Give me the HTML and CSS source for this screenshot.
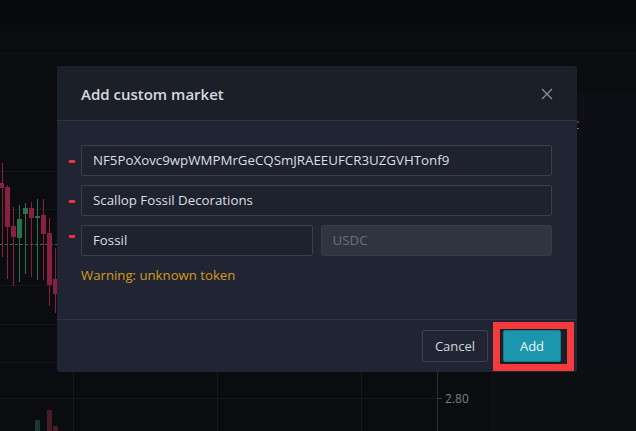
FILE: index.html
```html
<!DOCTYPE html>
<html>
<head>
<meta charset="utf-8">
<link rel="stylesheet" href="styles.css">
</head>
<body>
<div class="backdrop">
  <svg class="chart" width="636" height="431" viewBox="0 0 636 431" xmlns="http://www.w3.org/2000/svg">
    <rect x="0" y="0" width="636" height="431" fill="#0a0c10"/>
    <rect x="0" y="0" width="636" height="31" fill="#090a0d"/>
    <rect x="577" y="93" width="59" height="338" fill="#0d0f14"/>
    <rect x="491" y="372" width="145" height="59" fill="#0d0f13"/>
    <g stroke="#14171d" stroke-width="1">
      <line x1="0" y1="171.5" x2="57" y2="171.5"/>
      <line x1="0" y1="209.5" x2="57" y2="209.5"/>
      <line x1="0" y1="285.5" x2="57" y2="285.5"/>
      <line x1="0" y1="324.5" x2="57" y2="324.5"/>
      <line x1="0" y1="362.5" x2="57" y2="362.5"/>
      <line x1="0" y1="398.5" x2="436" y2="398.5"/>
      <line x1="73.5" y1="372" x2="73.5" y2="431"/>
      <line x1="217.5" y1="372" x2="217.5" y2="431"/>
      <line x1="361.5" y1="372" x2="361.5" y2="431"/>
    </g>
    <line x1="0" y1="53.5" x2="636" y2="53.5" stroke="#0e1015"/>
    <line x1="437.5" y1="372" x2="437.5" y2="431" stroke="#2a2e36"/>
    <line x1="437" y1="398.5" x2="442" y2="398.5" stroke="#3a3e46"/>
    <text x="445" y="403" class="axis">2.80</text>
    <line x1="0" y1="244.5" x2="57" y2="244.5" stroke="#2a7a48" stroke-dasharray="3,2"/>
    <g stroke-width="1">
      <line x1="2.5" y1="163" x2="2.5" y2="257" stroke="#8a2040"/>
      <rect x="0" y="183" width="4" height="5" fill="#8a2040"/>
      <line x1="7.5" y1="185" x2="7.5" y2="279" stroke="#8a2040"/>
      <rect x="5" y="187" width="5" height="40" fill="#8a2040"/>
      <line x1="13.5" y1="207" x2="13.5" y2="286" stroke="#8a2040"/>
      <rect x="11" y="226" width="5" height="11" fill="#8a2040"/>
      <line x1="19.5" y1="205" x2="19.5" y2="282" stroke="#2a7048"/>
      <rect x="17" y="219" width="5" height="19" fill="#2a7048"/>
      <line x1="25.5" y1="203" x2="25.5" y2="274" stroke="#2a7048"/>
      <rect x="23" y="208" width="5" height="6" fill="#2a7048"/>
      <line x1="31.5" y1="202" x2="31.5" y2="277" stroke="#8a2040"/>
      <rect x="29" y="208" width="5" height="10" fill="#8a2040"/>
      <line x1="37.5" y1="199" x2="37.5" y2="280" stroke="#2a7048"/>
      <rect x="35" y="216" width="5" height="2" fill="#2a7048"/>
      <line x1="43.5" y1="199" x2="43.5" y2="280" stroke="#8a2040"/>
      <rect x="41" y="215" width="5" height="19" fill="#8a2040"/>
      <line x1="49.5" y1="218" x2="49.5" y2="306" stroke="#8a2040"/>
      <rect x="47" y="233" width="5" height="52" fill="#8a2040"/>
      <line x1="55.5" y1="248" x2="55.5" y2="313" stroke="#8a2040"/>
      <rect x="53" y="279" width="4" height="15" fill="#8a2040"/>
    </g>
    <rect x="35" y="420" width="5" height="11" fill="#173a2c"/>
    <rect x="47" y="410" width="5" height="21" fill="#4a1a28"/>
    <rect x="53" y="426" width="5" height="5" fill="#4a1a28"/>
    <rect x="577" y="121" width="2" height="2" fill="#7a2a2a"/>
    <rect x="577" y="128" width="2" height="1" fill="#9a6a20"/>
  </svg>

  <div class="modal">
    <div class="modal-header">
      <h2 class="modal-title">Add custom market</h2>
      <svg class="close" width="12" height="12" viewBox="0 0 12 12" xmlns="http://www.w3.org/2000/svg">
        <path d="M1 1 L11 11 M11 1 L1 11" stroke="#8b9099" stroke-width="1.3" fill="none"/>
      </svg>
    </div>
    <div class="modal-body">
      <div class="row">
        <span class="req"></span>
        <div class="input">NF5PoXovc9wpWMPMrGeCQSmJRAEEUFCR3UZGVHTonf9</div>
      </div>
      <div class="row">
        <span class="req"></span>
        <div class="input">Scallop Fossil Decorations</div>
      </div>
      <div class="row">
        <span class="req req-high"></span>
        <div class="pair">
          <div class="input">Fossil</div>
          <div class="input disabled">USDC</div>
        </div>
      </div>
      <div class="warning">Warning: unknown token</div>
    </div>
    <div class="modal-footer">
      <button class="btn btn-cancel">Cancel</button>
      <div class="highlight">
        <button class="btn btn-add">Add</button>
      </div>
    </div>
  </div>
</div>
</body>
</html>
```

FILE: styles.css
```css
* { box-sizing: border-box; }
html, body {
  margin: 0;
  padding: 0;
  width: 636px;
  height: 431px;
  overflow: hidden;
  background: #0a0c10;
  font-family: "Open Sans", "Noto Sans", sans-serif;
}
.backdrop {
  position: relative;
  width: 636px;
  height: 431px;
}
.chart {
  position: absolute;
  left: 0;
  top: 0;
  display: block;
}
.axis {
  font-family: "Open Sans", sans-serif;
  font-size: 12px;
  fill: #7b7f87;
}
.modal {
  position: absolute;
  left: 57px;
  top: 66px;
  width: 520px;
  height: 306px;
  background: #212533;
  border-radius: 3px;
  display: flex;
  flex-direction: column;
  overflow: hidden;
}
.modal-header {
  height: 55px;
  background: #1b1f28;
  border-bottom: 1px solid #2f333c;
  display: flex;
  align-items: center;
  justify-content: space-between;
  padding: 0 24px 0 24px;
}
.modal-title {
  margin: 0;
  font-size: 15px;
  font-weight: 600;
  color: #d6d9de;
  letter-spacing: 0;
  padding-top: 1px;
}
.close { display: block; margin-top: 2px; }
.modal-body {
  flex: 1;
  padding: 24px 24px 0 24px;
  display: flex;
  flex-direction: column;
  gap: 9px;
}
.row {
  position: relative;
  display: flex;
}
.req {
  position: absolute;
  left: -12px;
  top: 15px;
  width: 6px;
  height: 3px;
  background: #e8313b;
}
.req-high { top: 10px; }
.pair {
  display: flex;
  gap: 8px;
  width: 471px;
}
.pair .input { flex: 1; }
.input {
  width: 471px;
  height: 31px;
  border: 1px solid #3b3f49;
  border-radius: 2px;
  background: #1e222e;
  color: #dcdfe3;
  font-size: 13.3px;
  line-height: 29px;
  padding: 0 11px;
  white-space: nowrap;
}
.input.disabled {
  background: #2f3440;
  border-color: #363b46;
  color: #6c717b;
}
.warning {
  margin-top: 1px;
  font-size: 13.2px;
  color: #d49a1c;
}
.modal-footer {
  height: 53px;
  border-top: 1px solid #2f333d;
  display: flex;
  align-items: center;
  justify-content: flex-end;
  padding: 0 3px 0 0;
  gap: 5px;
}
.btn {
  font-family: inherit;
  font-size: 13px;
  height: 32px;
  border-radius: 2px;
  cursor: pointer;
}
.btn-cancel {
  width: 66px;
  background: transparent;
  border: 1px solid #3c414b;
  color: #d2d5da;
}
.highlight {
  border: 7px solid #f43a3d;
  background: #1a1e27;
  padding: 1px 3px;
  height: 49px;
  width: 81px;
  display: flex;
  align-items: center;
  justify-content: flex-start;
}
.btn-add {
  width: 58px;
  background: #1c96ad;
  border: 1px solid #167e92;
  color: #eef6f8;
}
```
